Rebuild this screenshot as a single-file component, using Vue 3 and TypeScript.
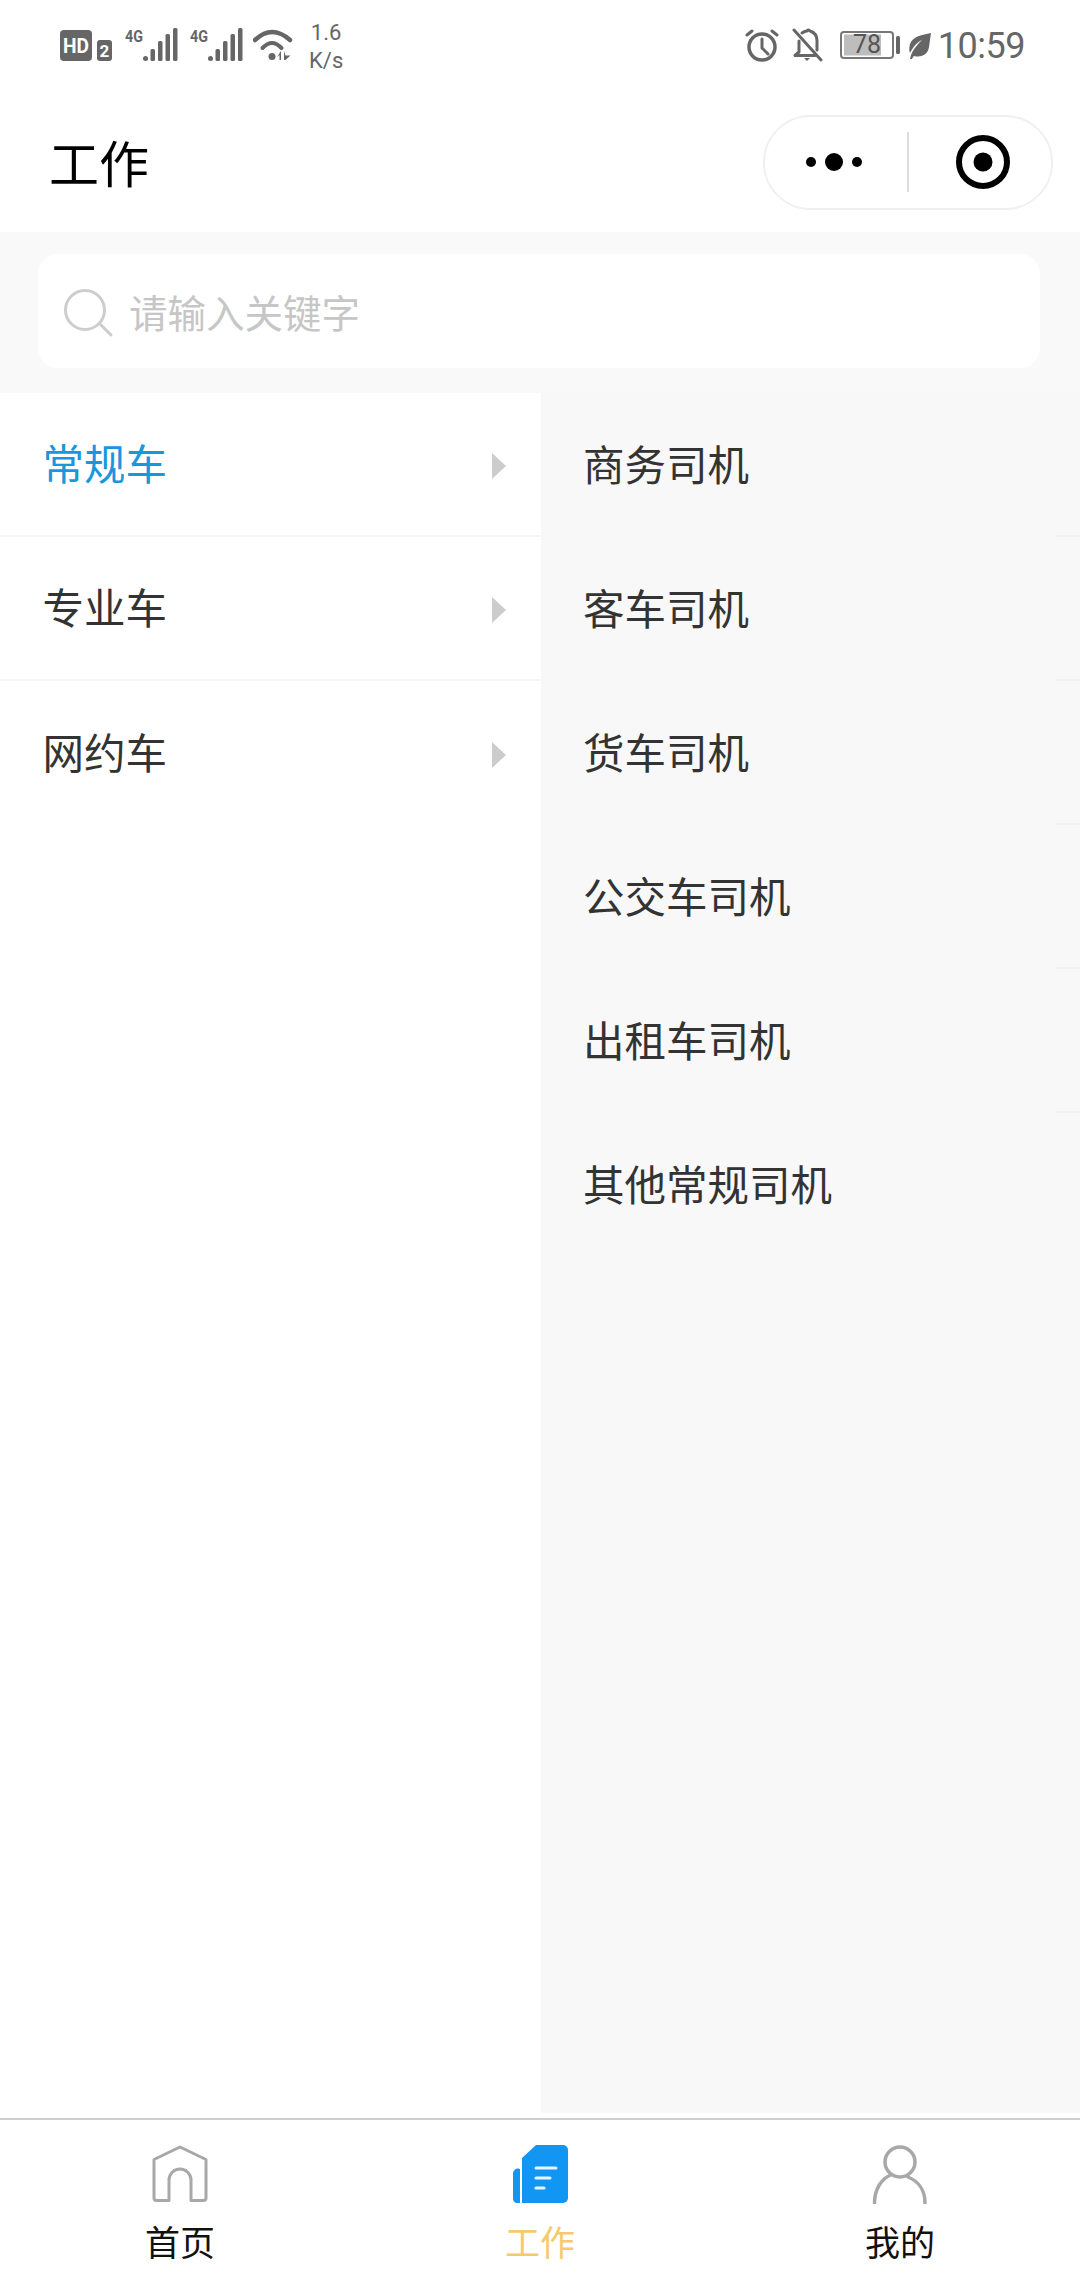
<script setup lang="ts">
const leftItems: { name: string; active?: boolean }[] = [
  { name: '常规车', active: true },
  { name: '专业车' },
  { name: '网约车' },
]
const rightItems: string[] = ['商务司机', '客车司机', '货车司机', '公交车司机', '出租车司机', '其他常规司机']
const signals: number[] = [0, 1]
</script>

<template>
  <div class="page">
    <header class="status">
      <div class="status-left">
        <svg class="hd" width="52" height="32" viewBox="0 0 52 32">
          <rect x="0" y="0" width="32" height="31" rx="4" fill="#666" />
          <text x="16" y="23" class="hd-text" text-anchor="middle" textLength="26" lengthAdjust="spacingAndGlyphs">HD</text>
          <rect x="37" y="10" width="15" height="21" rx="3" fill="#666" />
          <text x="44.5" y="27" class="two-text" text-anchor="middle">2</text>
        </svg>
        <svg v-for="s in signals" :key="s" class="signal" width="53" height="35" viewBox="0 0 53 35">
          <text x="0" y="15" class="g-text" textLength="18" lengthAdjust="spacingAndGlyphs">4G</text>
          <g fill="#666">
            <rect x="18" y="29" width="5" height="5" rx="2.5" />
            <rect x="25.5" y="22" width="4.500" height="12" rx="1.500" />
            <rect x="33" y="14" width="4.500" height="20" rx="1.500" />
            <rect x="40.500" y="7" width="4.500" height="27" rx="1.500" />
            <rect x="48" y="1" width="4.500" height="33" rx="1.500" />
          </g>
        </svg>
        <svg class="wifi" width="40" height="32" viewBox="0 0 40 32">
          <g fill="none" stroke="#666" stroke-linecap="round">
            <path d="M2 11 Q19 -5 37 11" stroke-width="4.500" />
            <path d="M9.500 19 Q19 9 28.500 19" stroke-width="4" />
          </g>
          <circle cx="19" cy="27.500" r="3.500" fill="#666" />
          <path d="M28 22v9h-1.500v-5l-2.500 2zM31 22v9h1.500l5-4.500h-5z" fill="#666" />
        </svg>
        <div class="speed"><span>1.6</span><span>K/s</span></div>
      </div>
      <div class="status-right">
        <svg width="34" height="34" viewBox="0 0 34 34">
          <g fill="none" stroke="#666" stroke-linecap="round" stroke-linejoin="round">
            <circle cx="17" cy="19" r="13" stroke-width="3.500" />
            <path d="M17 11v9l6 6" stroke-width="3" />
            <path d="M2 7l5-4M32 7l-5-4" stroke-width="3" />
          </g>
        </svg>
        <svg width="31" height="34" viewBox="0 0 31 34">
          <g fill="none" stroke="#666" stroke-width="3" stroke-linecap="round" stroke-linejoin="round">
            <path d="M2 2l27 30" />
            <path d="M7 13v11l-4 3.500h20" />
            <path d="M10 5q3-2 5-2 1-2 3 0 7 2 7 10v9" />
          </g>
          <path d="M12 30h6l-3 3z" fill="#666" />
        </svg>
        <svg width="60" height="28" viewBox="0 0 60 28">
          <rect x="4" y="3.500" width="37" height="21" fill="#bdbdbd" />
          <rect x="1" y="1" width="52" height="26" rx="3" fill="none" stroke="#777" stroke-width="2" />
          <rect x="56" y="5" width="4" height="18" rx="1.500" fill="#666" />
          <text x="27" y="22" class="bat-text" text-anchor="middle">78</text>
        </svg>
        <svg class="leaf" width="23" height="26" viewBox="0 0 23 26">
          <path d="M23 0C14 2 5 3 2 11c-1 4-1 7 0 9C6 12 10 9 14 7 10 11 6 15 3 22l-1 4 2 0c1-2 1-2 2-3 8 2 14-2 15-9z" fill="#666" />
        </svg>
        <span class="time">10:59</span>
      </div>
    </header>

    <nav class="nav">
      <h1 class="title">工作</h1>
      <div class="capsule">
        <div class="dots">
          <i class="dot" /><i class="dot big" /><i class="dot" />
        </div>
        <i class="divider" />
        <svg class="target" width="54" height="54" viewBox="0 0 54 54">
          <circle cx="27" cy="27" r="24" fill="none" stroke="#000" stroke-width="6" />
          <circle cx="27" cy="27" r="9.500" fill="#000" />
        </svg>
      </div>
    </nav>

    <section class="search-wrap">
      <div class="search">
        <svg width="52" height="52" viewBox="0 0 52 52">
          <circle cx="23" cy="23" r="19.500" fill="none" stroke="#cdcdcd" stroke-width="3" />
          <path d="M39 38l10 10" fill="none" stroke="#cdcdcd" stroke-width="3" stroke-linecap="round" />
        </svg>
        <span class="placeholder">请输入关键字</span>
      </div>
    </section>

    <main class="body">
      <ul class="left">
        <li v-for="item in leftItems" :key="item.name" class="left-item" :class="{ active: item.active }">
          <span class="label">{{ item.name }}</span>
          <i class="arrow" />
        </li>
      </ul>
      <ul class="right">
        <li v-for="item in rightItems" :key="item" class="right-item">
          <span class="label">{{ item }}</span>
        </li>
      </ul>
    </main>

    <footer class="tabs">
      <div class="tab">
        <svg width="58" height="60" viewBox="0 0 58 60">
          <path d="M3 15.500 29 3l26 12.500V54a2.500 2.500 0 0 1-2.500 2.500H40V36a11 11 0 0 0-22 0v20.500H5.500A2.500 2.500 0 0 1 3 54z" fill="none" stroke="#a8a8a8" stroke-width="3" stroke-linejoin="round" />
        </svg>
        <span>首页</span>
      </div>
      <div class="tab on">
        <svg width="58" height="60" viewBox="0 0 58 60">
          <path d="M9 25v34H5.500A4.500 4.500 0 0 1 2 55V30a5 5 0 0 1 7-5z" fill="#1296f3" />
          <path d="M11 14 25 1h27a5 5 0 0 1 5 5v48a5 5 0 0 1-5 5H11z" fill="#1296f3" />
          <g stroke="#e6f5ff" stroke-width="3" stroke-linecap="round">
            <path d="M25 24h20M25 34h14M25 44h8" />
          </g>
        </svg>
        <span>工作</span>
      </div>
      <div class="tab">
        <svg width="58" height="60" viewBox="0 0 58 60">
          <g fill="none" stroke="#a8a8a8" stroke-width="3.500" stroke-linecap="round">
            <circle cx="29" cy="18" r="15" />
            <path d="M3.500 59c0-14 7-24 16-28M37 33c10 4 17 13 17 26" />
          </g>
        </svg>
        <span>我的</span>
      </div>
    </footer>
  </div>
</template>

<style>
html, body { margin: 0; padding: 0; background: #fff; }
</style>

<style scoped>
* { box-sizing: border-box; }
.page {
  width: 1080px;
  height: 2280px;
  display: flex;
  flex-direction: column;
  background: #fff;
  font-family: "Noto Sans CJK SC", "Noto Sans", sans-serif;
  overflow: hidden;
}
.status {
  height: 92px;
  flex: none;
  display: flex;
  justify-content: space-between;
  align-items: flex-start;
  padding: 0 55px 0 60px;
  color: #666;
  font-family: Roboto, sans-serif;
}
.status-left, .status-right { display: flex; align-items: flex-start; }
.status-left { padding-top: 30px; }
.status-right { padding-top: 28px; }
.hd { margin-right: 13px; display: block; }
.hd-text { font: 700 21px Roboto, sans-serif; fill: #fff; }
.two-text { font: 700 17px Roboto, sans-serif; fill: #fff; }
.g-text { font: 700 17px Roboto, sans-serif; fill: #666; }
.signal { margin-top: -3px; margin-right: 12px; }
.signal + .signal { margin-right: 10px; }
.wifi { margin-top: -1px; margin-right: 16px; }
.speed {
  margin-top: -11px;
  display: flex;
  flex-direction: column;
  align-items: center;
  font-size: 22px;
  font-weight: 400;
  line-height: 28px;
}
.status-right > svg:nth-child(1) { margin-right: 13px; }
.status-right > svg:nth-child(2) { margin-right: 17px; }
.status-right > svg:nth-child(3) { margin-top: 3px; margin-right: 8px; }
.bat-text { font: 400 25px Roboto, sans-serif; fill: #555; }
.leaf { margin-top: 5px; margin-right: 7px; }
.time {
  font-size: 36px;
  font-weight: 400;
  line-height: 36px;
  letter-spacing: -0.5px;
}
.nav {
  height: 140px;
  flex: none;
  display: flex;
  align-items: center;
  justify-content: space-between;
  padding: 0 27px 0 49px;
}
.title {
  margin: 0 0 2px;
  font-size: 50px;
  font-weight: 400;
  line-height: 60px;
  color: #000;
}
.capsule {
  width: 290px;
  height: 95px;
  display: flex;
  align-items: center;
  border: 2px solid #f0f0f0;
  border-radius: 48px;
  background: #fff;
  padding-left: 41px;
}
.dots { display: flex; align-items: center; gap: 9px; width: 101px; }
.dot { width: 10px; height: 10px; border-radius: 50%; background: #000; }
.dot.big { width: 18px; height: 18px; }
.divider { width: 1.500px; height: 60px; background: #dcdcdc; }
.target { margin-left: 47px; }
.search-wrap {
  height: 161px;
  flex: none;
  padding: 22px 40px 25px 38px;
  background: #f9f9f9;
}
.search {
  height: 114px;
  background: #fff;
  border-radius: 20px;
  display: flex;
  align-items: center;
  padding-left: 24px;
}
.search svg { margin-top: 4px; margin-right: 15px; }
.placeholder { font-size: 38.500px; color: #c6c6c6; line-height: 50px; }
.body {
  flex: 1;
  min-height: 0;
  display: flex;
}
.left, .right { list-style: none; margin: 0; padding: 0; }
.left { width: 541px; background: #fff; }
.right { flex: 1; background: #f8f8f9; }
.label { margin-bottom: 5px; }
.left-item {
  height: 144px;
  display: flex;
  align-items: center;
  justify-content: space-between;
  padding: 0 35px 0 42.500px;
  border-bottom: 2px solid #f5f5f5;
  font-size: 41.500px;
  color: #333;
}
.left-item:last-child { border-bottom: 0; }
.left-item.active .label { color: #1a96dc; }
.arrow {
  width: 0;
  height: 0;
  border-left: 14px solid #ccc;
  border-top: 13px solid transparent;
  border-bottom: 13px solid transparent;
  margin-top: 4px;
}
.right-item {
  height: 144px;
  display: flex;
  align-items: center;
  padding-left: 42px;
  font-size: 41.500px;
  color: #333;
  position: relative;
}
.right-item:not(:last-child)::after {
  content: "";
  position: absolute;
  right: 0;
  bottom: 0;
  width: 25px;
  height: 2px;
  background: #f2f2f2;
}
.tabs {
  margin-top: 5px;
  height: 162px;
  flex: none;
  border-top: 2px solid #cfcfcf;
  display: grid;
  grid-template-columns: repeat(3, 1fr);
  background: #fff;
}
.tab {
  display: flex;
  flex-direction: column;
  align-items: center;
  padding-top: 24px;
  font-size: 35px;
  line-height: 44px;
  color: #111;
}
.tab svg { display: block; margin-bottom: 15px; }
.tab.on span { color: #f5ca6e; }
</style>
